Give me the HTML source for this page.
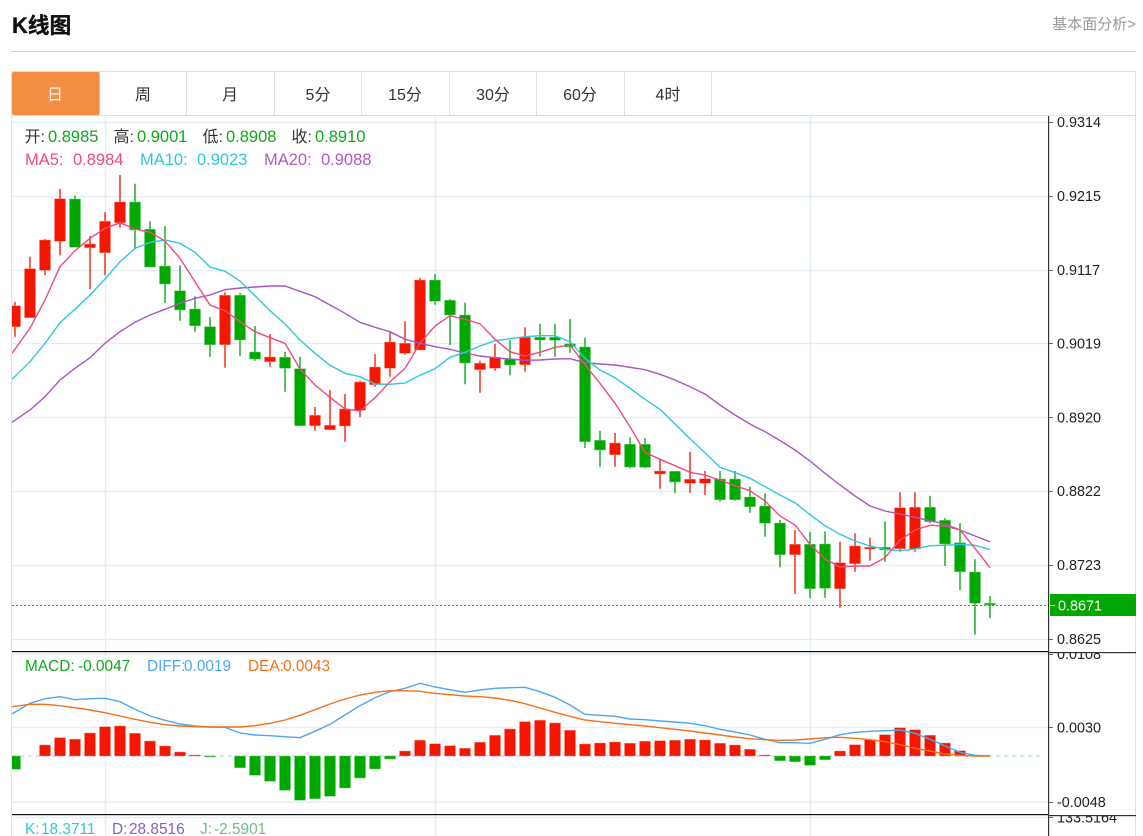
<!DOCTYPE html>
<html lang="zh">
<head>
<meta charset="utf-8">
<title>K线图</title>
<style>
html,body{margin:0;padding:0;background:#fff;width:1143px;height:836px;overflow:hidden}
svg{display:block;position:absolute;left:0;top:0}
text{font-family:"Liberation Sans","Noto Sans CJK SC",sans-serif}
.tab{font-size:16px;fill:#333;text-anchor:middle}
.ax{font-size:14.4px;fill:#222}
</style>
</head>
<body>
<svg width="1143" height="836" viewBox="0 0 1143 836" xmlns="http://www.w3.org/2000/svg">
<defs>
<clipPath id="c1"><rect x="12" y="116" width="1036" height="535"/></clipPath>
<clipPath id="c2"><rect x="12" y="652" width="1036" height="162"/></clipPath>
<clipPath id="cA"><rect x="1049" y="653" width="87" height="30"/></clipPath>
<clipPath id="cB"><rect x="1049" y="816" width="87" height="20"/></clipPath>
</defs>

<!-- header -->
<text x="12" y="33" font-size="21.8" font-weight="700" fill="#111" stroke="#111" stroke-width=".35">K线图</text>
<text x="1136" y="29" font-size="15" fill="#999" text-anchor="end">基本面分析&gt;</text>
<rect x="11" y="51" width="1125" height="1" fill="#d2d2d2"/>

<!-- tabs -->
<path d="M11.5 836V71.5H1135.5V836" fill="none" stroke="#dfdfdf"/>
<path d="M11.5 115.5H1135.5M99.5 72V115M186.5 72V115M274.5 72V115M361.5 72V115M449.5 72V115M536.5 72V115M624.5 72V115M711.5 72V115" fill="none" stroke="#dfdfdf"/>
<rect x="12" y="72" width="87.5" height="43" rx="2" fill="#f48c42"/>
<text class="tab" x="55" y="100" style="fill:#fff">日</text>
<text class="tab" x="143" y="100">周</text>
<text class="tab" x="230" y="100">月</text>
<text class="tab" x="318" y="100">5分</text>
<text class="tab" x="405" y="100">15分</text>
<text class="tab" x="493" y="100">30分</text>
<text class="tab" x="580" y="100">60分</text>
<text class="tab" x="668" y="100">4时</text>

<!-- grid -->
<path d="M12 122.5H1048M12 196.5H1048M12 270.5H1048M12 343.5H1048M12 417.5H1048M12 491.5H1048M12 565.5H1048M12 639.5H1048" stroke="#e3edf5" fill="none" stroke-width="1.3"/>
<path d="M12 654.5H1048M12 727.5H1048M12 802H1048M12 817.5H1048" stroke="#ebeff3" fill="none" stroke-width="1.5"/>
<path d="M105.5 116V836M435.5 116V836M810.5 116V836" stroke="#e3edf5" fill="none" stroke-width="1.5"/>

<!-- candles -->
<g clip-path="url(#c1)">
<path fill="none" stroke="#f5301c" stroke-width="1.5" d="M15 302V336.7M30 256.7V317.7M45 239V275M60 189V255.3M90 236V289.3M105 212.3V275.3M120 175V227.7M225 292.3V367.7M270 334V366.7M315 407V430.7M330 390V429.7M345 394V441.7M360 380.7V417M375 354.3V386.7M390 332.3V376.7M405 321.3V354.7M420 278V350M480 360.7V392.7M495 344V370.7M525 327.3V371.7M615 433V466.7M660 459.3V488.7M690 452V492.7M705 471V495M795 530V594.3M840 541.7V607.7M855 533.3V571.7M870 537.7V560.7M900 492.3V551.7M915 492.3V551.7"/>
<path fill="#f51600" stroke="#f9867a" stroke-width=".5" d="M9.5 305.7h11V326.7h-11zM24.5 268.7h11V317.7h-11zM39.5 240h11V270.3h-11zM54.5 198.7h11V241.3h-11zM84.5 244h11V247.7h-11zM99.5 221.3h11V252.7h-11zM114.5 202h11V222.7h-11zM219.5 295.3h11V344.7h-11zM264.5 357h11V361.7h-11zM309.5 415.3h11V425.7h-11zM324.5 425.3h11V429.7h-11zM339.5 409h11V426h-11zM354.5 382h11V410.3h-11zM369.5 367h11V384.7h-11zM384.5 342h11V368.3h-11zM399.5 343.3h11V353.3h-11zM414.5 280h11V350h-11zM474.5 363.3h11V369.7h-11zM489.5 357.3h11V368.3h-11zM519.5 337.3h11V364.7h-11zM609.5 443h11V454.7h-11zM654.5 471h11V474h-11zM684.5 479.3h11V483.3h-11zM699.5 478.7h11V483.3h-11zM789.5 544.3h11V554.7h-11zM834.5 562.7h11V588.7h-11zM849.5 546h11V563.7h-11zM864.5 547.3h11V549h-11zM894.5 507.7h11V548.7h-11zM909.5 507.3h11V549h-11z"/>
<path fill="none" stroke="#1fae2a" stroke-width="1.5" d="M75 195.7V247.3M135 183.7V249.3M150 221.3V267M165 226.3V303M180 265.3V320.7M195 296.3V332M210 317V356.7M240 292.7V355.7M255 326V360.7M285 351.7V391.7M300 356.7V425.7M435 274V304.7M450 299.3V345M465 302.7V384.3M510 340V375.3M540 323.7V356.7M555 324V356.7M570 319V352.7M585 337.7V448M600 430.7V466.7M630 437.3V468.3M645 438V468.3M675 471.3V493.3M720 471V501.7M735 471V500.7M750 486.7V512.7M765 493.3V536.7M780 520V567.3M810 531.7V598.3M825 531.3V597.7M885 521.3V561.7M930 495.7V523.3M945 518V566M960 523V590M975 559.3V634.7M990 596V618"/>
<path fill="#00a800" stroke="#6fce75" stroke-width=".5" d="M69.5 199h11V247.3h-11zM129.5 202h11V230h-11zM144.5 229.3h11V267h-11zM159.5 266h11V284h-11zM174.5 290.7h11V310h-11zM189.5 309h11V325.7h-11zM204.5 326.7h11V344.7h-11zM234.5 295.3h11V340h-11zM249.5 352h11V359h-11zM279.5 357.3h11V368.3h-11zM294.5 368.7h11V425.7h-11zM429.5 280h11V301.3h-11zM444.5 300.3h11V315h-11zM459.5 315h11V363h-11zM504.5 359.3h11V365h-11zM534.5 337.3h11V340h-11zM549.5 337.3h11V340.3h-11zM564.5 343.7h11V347h-11zM579.5 347h11V441.7h-11zM594.5 440.3h11V450h-11zM624.5 444.3h11V467h-11zM639.5 444.3h11V467.3h-11zM669.5 471.3h11V482h-11zM714.5 479h11V499.7h-11zM729.5 479h11V499.7h-11zM744.5 497h11V506.7h-11zM759.5 506h11V523.3h-11zM774.5 523h11V554.7h-11zM804.5 544.3h11V588.7h-11zM819.5 544h11V588.3h-11zM879.5 547.3h11V550h-11zM924.5 507.3h11V521.7h-11zM939.5 520.3h11V544h-11zM954.5 542.7h11V571.7h-11zM969.5 572h11V603.3h-11zM984.5 603.3h11V605h-11z"/>

<!-- MA lines -->
<polyline fill="none" stroke="#ab54c4" stroke-width="1.4" points="12,422.3 30,410 45,396.7 60,380 75,368.3 90,357.7 105,343.3 120,331.7 135,322.3 150,315 165,309.3 180,303.3 195,298.3 210,295 225,289.7 240,288 255,287 270,286 285,286 300,291.3 315,296.7 330,305 345,313.3 360,322.3 375,327.3 390,331.7 405,339.3 420,343.3 435,346.7 450,349.3 465,353 480,356 495,357.7 510,359 525,360.3 540,360 555,359 570,358.7 585,362.7 600,364 615,365 630,367.3 645,369.7 660,374.3 675,380 690,386.7 705,394 720,405 735,415 750,424 765,431.7 780,440.5 795,450 810,461 825,473.3 840,485 855,496 870,506 885,511 900,514 915,517.3 930,520.7 945,524 960,530 975,536 990,541.7"/>
<polyline fill="none" stroke="#2ec8de" stroke-width="1.4" points="12,379.3 30,361.7 45,343.3 60,322.7 75,309.3 90,295 105,279 120,261.7 135,248.3 150,242.3 165,240 180,243.3 195,252.3 210,267 225,271.3 240,281 255,295.7 270,310.7 285,324 300,340 315,353.3 330,365.3 345,373.3 360,376.7 375,384 390,384.3 405,383 420,375.3 435,368.7 450,357.3 465,352.3 480,346 495,340.7 510,338.7 525,336.7 540,335.7 555,335.7 570,341.7 585,358.3 600,370 615,377.7 630,388.3 645,399.3 660,409.3 675,424 690,438.7 705,452.7 720,467.3 735,472.7 750,478.3 765,486.7 780,495 795,502.7 810,514.7 825,525.7 840,534.3 855,541 870,546 885,549.3 900,550.7 915,549 930,545.7 945,545.3 960,544.3 975,545.3 990,549.7"/>
<polyline fill="none" stroke="#ef4a82" stroke-width="1.4" points="12,353.3 30,328.3 45,300 60,266.7 75,250.7 90,238.3 105,228.3 120,222.7 135,229 150,232.3 165,241 180,258.3 195,281.7 210,305 225,310.7 240,321.7 255,331.7 270,337.7 285,343.3 300,369 315,385 330,397.3 345,409 360,411 375,397.7 390,381.7 405,368.3 420,343.3 435,326 450,315.7 465,319.3 480,323.7 495,339.3 510,351.7 525,356 540,352.3 555,347.3 570,345 585,365 600,383.3 615,403.3 630,426.7 645,452.3 660,459.3 675,465.7 690,472.3 705,475 720,480 735,485.7 750,490.7 765,501 780,516 795,525 810,544.3 825,559 840,567 855,566 870,566 885,557.7 900,540 915,530 930,525.3 945,526 960,530 975,548.3 990,567.7"/>
</g>

<!-- last price dashes -->
<path d="M12 605.500H1046" stroke="#2aae2a" stroke-width="1" stroke-dasharray="2 2" fill="none"/>

<!-- MACD -->
<g clip-path="url(#c2)">
<path d="M12 756H1043" stroke="#a8dcf0" stroke-width="1.3" stroke-dasharray="4 4" fill="none"/>
<path fill="#f51600" stroke="#f9867a" stroke-width=".5" d="M39.5 745h11V756h-11zM54.5 737.7h11V756h-11zM69.5 739.3h11V756h-11zM84.5 733h11V756h-11zM99.5 726.7h11V756h-11zM114.5 726h11V756h-11zM129.5 733.3h11V756h-11zM144.5 741h11V756h-11zM159.5 746h11V756h-11zM174.5 752h11V756h-11zM189.5 755h11V756h-11zM399.5 751h11V756h-11zM414.5 740.3h11V756h-11zM429.5 743.7h11V756h-11zM444.5 745.7h11V756h-11zM459.5 748.3h11V756h-11zM474.5 742.3h11V756h-11zM489.5 735.3h11V756h-11zM504.5 729h11V756h-11zM519.5 721.7h11V756h-11zM534.5 720.3h11V756h-11zM549.5 723h11V756h-11zM564.5 730.3h11V756h-11zM579.5 744h11V756h-11zM594.5 743h11V756h-11zM609.5 742h11V756h-11zM624.5 743.3h11V756h-11zM639.5 741.3h11V756h-11zM654.5 740.7h11V756h-11zM669.5 740.3h11V756h-11zM684.5 739.3h11V756h-11zM699.5 740h11V756h-11zM714.5 743.3h11V756h-11zM729.5 745h11V756h-11zM744.5 749.3h11V756h-11zM759.5 755h11V756h-11zM834.5 751h11V756h-11zM849.5 744.7h11V756h-11zM864.5 739.7h11V756h-11zM879.5 734.7h11V756h-11zM894.5 727.7h11V756h-11zM909.5 729.7h11V756h-11zM924.5 735.3h11V756h-11zM939.5 743h11V756h-11zM954.5 750.7h11V756h-11z"/>
<path fill="#00a800" stroke="#6fce75" stroke-width=".5" d="M9.5 756h11V769.3h-11zM204.5 756h11V757h-11zM234.5 756h11V767.7h-11zM249.5 756h11V775.3h-11zM264.5 756h11V781.3h-11zM279.5 756h11V790.3h-11zM294.5 756h11V800.3h-11zM309.5 756h11V798.7h-11zM324.5 756h11V796.3h-11zM339.5 756h11V788h-11zM354.5 756h11V778h-11zM369.5 756h11V769h-11zM384.5 756h11V759h-11zM774.5 756h11V760.7h-11zM789.5 756h11V761.7h-11zM804.5 756h11V765.3h-11zM819.5 756h11V759.7h-11z"/>
<polyline fill="none" stroke="#4da6f2" stroke-width="1.4" points="12,714 30,703.3 45,698.7 60,696.7 75,699.7 90,698.7 105,698.3 120,701.7 135,709.3 150,716 165,720.3 180,724 195,726 210,727 225,727.3 240,733 255,735 270,735.7 285,736.7 300,737.7 315,731.3 330,724.3 345,715 360,705.7 375,697.7 390,691.7 405,688.3 420,683.3 435,687 450,689.7 465,692.3 480,690 495,688.3 510,687.7 525,687.3 540,691.7 555,697.3 570,705 585,714.3 600,715.3 615,716.3 630,719 645,719.7 660,721 675,722 690,723.3 705,725.7 720,729.3 735,732 750,735 765,739.3 780,742.7 795,742.7 810,743.3 825,739.3 840,734.7 855,732.3 870,731.3 885,730.7 900,730 915,733.3 930,739.3 945,746 960,752.3 975,755.3 990,756"/>
<polyline fill="none" stroke="#f5701a" stroke-width="1.4" points="12,706.7 30,704.3 45,704.3 60,705.7 75,707.7 90,710 105,712.7 120,716 135,719.3 150,722.3 165,724.7 180,726 195,726.7 210,727 225,727 240,727 255,725.7 270,723.3 285,720 300,715.3 315,709.7 330,704 345,699 360,695 375,692.3 390,690.7 405,690.7 420,691.3 435,693.3 450,694.7 465,696 480,696.7 495,698 510,700.3 525,703.7 540,708 555,712.3 570,716.3 585,720 600,721.7 615,723.3 630,724.7 645,726 660,727.7 675,729.3 690,731 705,733 720,735 735,737 750,738.7 765,739.7 780,740.3 795,740 810,739 825,737.7 840,737.3 855,738.3 870,739.7 885,741.7 900,744.7 915,748.3 930,751 945,754 960,755.3 975,756 990,756"/>
</g>

<!-- panel dividers and axis -->
<rect x="12" y="651" width="1036" height="1.2" fill="#111"/>
<rect x="12" y="814" width="1036" height="1.2" fill="#111"/>
<rect x="1048" y="652" width="88" height="1.2" fill="#333"/>
<rect x="1048" y="815" width="88" height="1.2" fill="#333"/>
<rect x="1048" y="116" width="1.2" height="720" fill="#333"/>
<path d="M1049 122.5h4M1049 196.5h4M1049 270.5h4M1049 343.5h4M1049 417.5h4M1049 491.5h4M1049 565.5h4M1049 639.5h4M1049 654.5h4M1049 727.5h4M1049 802.5h4M1049 817.5h4" stroke="#666" fill="none"/>

<!-- axis labels -->
<rect x="1050" y="594" width="86" height="22" fill="#00a800"/>
<path d="M1050 605.5h5" stroke="#fff"/>
<text class="ax" x="1058" y="610.5" style="fill:#fff">0.8671</text>
<text class="ax" x="1057" y="127">0.9314</text>
<text class="ax" x="1057" y="201">0.9215</text>
<text class="ax" x="1057" y="275">0.9117</text>
<text class="ax" x="1057" y="348.5">0.9019</text>
<text class="ax" x="1057" y="422.5">0.8920</text>
<text class="ax" x="1057" y="496">0.8822</text>
<text class="ax" x="1057" y="570">0.8723</text>
<text class="ax" x="1057" y="644">0.8625</text>
<g clip-path="url(#cA)"><text class="ax" x="1057" y="659">0.0108</text></g>
<text class="ax" x="1057" y="732.5">0.0030</text>
<text class="ax" x="1057" y="807">-0.0048</text>
<g clip-path="url(#cB)"><text class="ax" x="1057" y="822.5">133.5164</text></g>

<!-- legends -->
<g>
<text x="24.500" y="142" fill="#333" font-size="16">开:</text><text x="48" y="142" fill="#10a81c" font-size="16.5">0.8985</text>
<text x="113.500" y="142" fill="#333" font-size="16">高:</text><text x="137" y="142" fill="#10a81c" font-size="16.5">0.9001</text>
<text x="202.500" y="142" fill="#333" font-size="16">低:</text><text x="226" y="142" fill="#10a81c" font-size="16.5">0.8908</text>
<text x="291.500" y="142" fill="#333" font-size="16">收:</text><text x="315" y="142" fill="#10a81c" font-size="16.5">0.8910</text>
<text x="25" y="165" fill="#ef4a82" font-size="16.5">MA5:</text><text x="73" y="165" fill="#ef4a82" font-size="16.5">0.8984</text>
<text x="140" y="165" fill="#2ec8de" font-size="16.5">MA10:</text><text x="197" y="165" fill="#2ec8de" font-size="16.5">0.9023</text>
<text x="264" y="165" fill="#b15ac6" font-size="16.5">MA20:</text><text x="321" y="165" fill="#b15ac6" font-size="16.5">0.9088</text>
</g>
<g font-size="15.4">
<text x="25" y="671" fill="#10a81c">MACD:</text><text x="78" y="671" fill="#10a81c">-0.0047</text>
<text x="147" y="671" fill="#4da6f2">DIFF:</text><text x="184" y="671" fill="#4da6f2">0.0019</text>
<text x="248" y="671" fill="#f5701a">DEA:</text><text x="283" y="671" fill="#f5701a">0.0043</text>
<text x="25" y="834" fill="#2ec8de">K:</text><text x="41" y="834" fill="#2ec8de">18.3711</text>
<text x="112" y="834" fill="#8560c4">D:</text><text x="129" y="834" fill="#8560c4">28.8516</text>
<text x="200" y="834" fill="#6fbf7f">J:</text><text x="214" y="834" fill="#6fbf7f">-2.5901</text>
</g>
</svg>
</body>
</html>
